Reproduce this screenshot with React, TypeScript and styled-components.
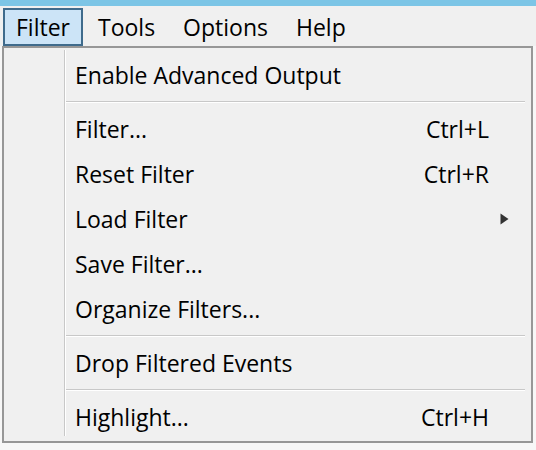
import React from "react";
import styled, { createGlobalStyle } from "styled-components";

const GlobalStyle = createGlobalStyle`
  html, body {
    margin: 0;
    padding: 0;
    background: #f0f0f0;
  }
  body {
    font-family: "Open Sans", "Noto Sans", sans-serif;
    color: #000;
  }
`;

const Window = styled.div`
  width: 536px;
  height: 450px;
  display: flex;
  flex-direction: column;
  overflow: hidden;
  background: #f7f7f7;
`;

const TitleStrip = styled.div`
  height: 6px;
  background: #7cc5e6;
  flex: none;
`;

const MenuBar = styled.div`
  height: 40px;
  display: flex;
  align-items: flex-start;
  gap: 2px;
  padding: 2px 0 0 3px;
  box-sizing: border-box;
  background: #f0f0f0;
  flex: none;
`;

const MenuBarItem = styled.div<{ $active?: boolean }>`
  height: 38px;
  box-sizing: border-box;
  padding: 0 11px;
  display: flex;
  align-items: center;
  font-size: 23px;
  border: 2px solid ${(p) => (p.$active ? "#3f6b8c" : "transparent")};
  background: ${(p) => (p.$active ? "#cce4f7" : "transparent")};
`;

const Dropdown = styled.div`
  margin-left: 2px;
  width: 531px;
  height: 397px;
  box-sizing: border-box;
  border: 2px solid #979797;
  background: #f0f0f0;
  padding: 2px;
  display: flex;
  flex: none;
`;

const Gutter = styled.div`
  width: 58px;
  flex: none;
  margin: 0 0 3px 0;
  border-right: 1px solid #c8c8c8;
  box-shadow: 1px 0 0 #ffffff;
`;

const ItemList = styled.div`
  flex: 1;
  display: flex;
  flex-direction: column;
  padding: 2px 0 0 1px;
`;

const Item = styled.div`
  height: 45px;
  display: flex;
  align-items: center;
  padding-left: 9px;
  font-size: 23px;
  flex: none;
`;

const Label = styled.span`
  flex: 1;
  white-space: nowrap;
`;

const Shortcut = styled.span`
  white-space: nowrap;
`;

const ArrowCell = styled.span`
  width: 40px;
  flex: none;
  padding-left: 11px;
  box-sizing: border-box;
  display: flex;
  align-items: center;
`;

const Separator = styled.div`
  height: 9px;
  flex: none;
  display: flex;
  align-items: center;
  padding-right: 4px;
  &::before {
    content: "";
    flex: 1;
    height: 1px;
    background: #c8c8c8;
    box-shadow: 0 1px 0 #ffffff;
  }
`;

type Entry =
  | { kind: "item"; label: string; shortcut?: string; submenu?: boolean }
  | { kind: "sep" };

const entries: Entry[] = [
  { kind: "item", label: "Enable Advanced Output" },
  { kind: "sep" },
  { kind: "item", label: "Filter...", shortcut: "Ctrl+L" },
  { kind: "item", label: "Reset Filter", shortcut: "Ctrl+R" },
  { kind: "item", label: "Load Filter", submenu: true },
  { kind: "item", label: "Save Filter..." },
  { kind: "item", label: "Organize Filters..." },
  { kind: "sep" },
  { kind: "item", label: "Drop Filtered Events" },
  { kind: "sep" },
  { kind: "item", label: "Highlight...", shortcut: "Ctrl+H" },
];

const SubArrow = () => (
  <svg width="9" height="12" viewBox="0 0 9 12">
    <path d="M0.5 0.5 L8.5 6 L0.5 11.5 Z" fill="#333" />
  </svg>
);

export default function App() {
  return (
    <>
      <GlobalStyle />
      <Window>
        <TitleStrip />
        <MenuBar>
          <MenuBarItem $active>Filter</MenuBarItem>
          <MenuBarItem>Tools</MenuBarItem>
          <MenuBarItem>Options</MenuBarItem>
          <MenuBarItem>Help</MenuBarItem>
        </MenuBar>
        <Dropdown>
          <Gutter />
          <ItemList>
            {entries.map((e, i) =>
              e.kind === "sep" ? (
                <Separator key={i} />
              ) : (
                <Item key={i}>
                  <Label>{e.label}</Label>
                  {e.shortcut && <Shortcut>{e.shortcut}</Shortcut>}
                  <ArrowCell>{e.submenu && <SubArrow />}</ArrowCell>
                </Item>
              )
            )}
          </ItemList>
        </Dropdown>
      </Window>
    </>
  );
}
